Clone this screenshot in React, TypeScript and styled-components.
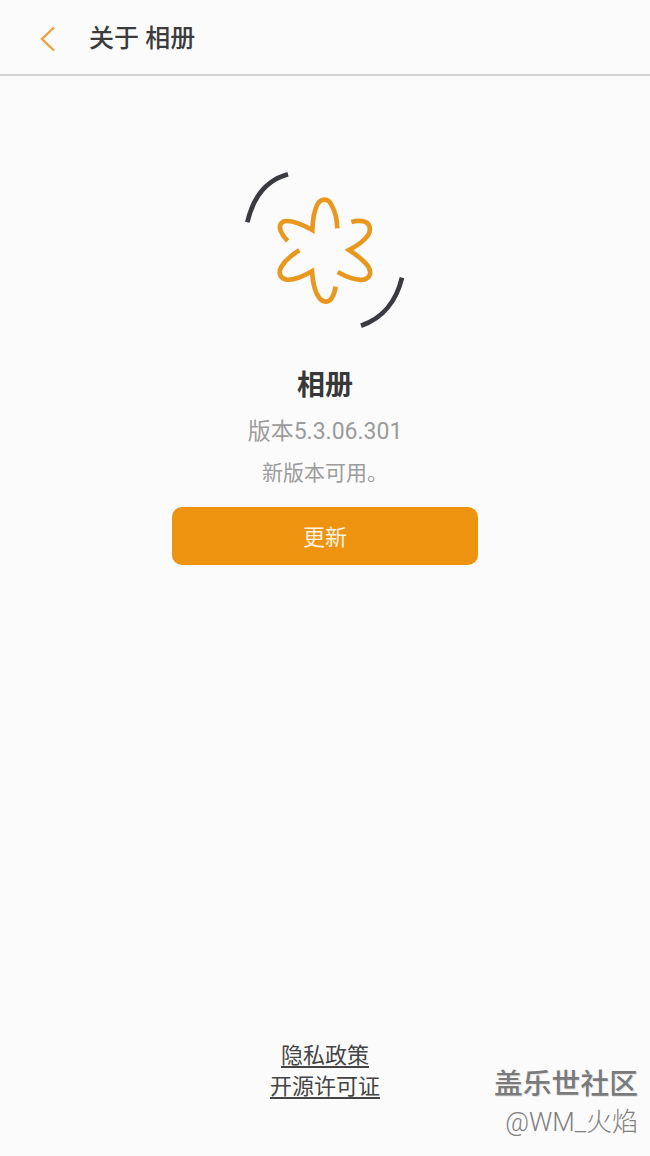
import React, { FC } from 'react'
import styled, { createGlobalStyle } from 'styled-components'

const GlobalStyle = createGlobalStyle`
  html, body {
    margin: 0;
    padding: 0;
    background: #fbfbfb;
  }
  * {
    box-sizing: border-box;
  }
`

const Page = styled.div`
  position: relative;
  display: flex;
  flex-direction: column;
  width: 650px;
  height: 1156px;
  overflow: hidden;
  background: #fbfbfb;
  font-family: Roboto, 'Noto Sans CJK SC', sans-serif;
`

const Header = styled.header`
  display: flex;
  align-items: center;
  height: 76px;
  padding: 3px 0 0 36px;
  border-bottom: 2px solid #d4d4d4;
`

const BackButton = styled.button`
  display: flex;
  width: 24px;
  height: 30px;
  padding: 0;
  margin-right: 29px;
  border: 0;
  background: none;
`

const Title = styled.h1`
  margin: 0;
  font-size: 25px;
  font-weight: 500;
  line-height: 30px;
  color: #3c3c3c;
`

const Main = styled.main`
  display: flex;
  flex-direction: column;
  align-items: center;
  padding-top: 74px;
`

const AppName = styled.h2`
  margin: 17px 0 0;
  font-size: 28px;
  font-weight: 700;
  line-height: 38px;
  color: #383838;
`

const Version = styled.div`
  margin-top: 11px;
  font-size: 23px;
  line-height: 32px;
  color: #9c9c9c;
`

const Notice = styled.div`
  margin-top: 10px;
  font-size: 21px;
  line-height: 30px;
  color: #9c9c9c;
`

const UpdateButton = styled.button`
  width: 306px;
  height: 58px;
  margin-top: 19px;
  padding: 0 0 2px;
  border: 0;
  border-radius: 10px;
  background: #ed930f;
  font-family: inherit;
  font-size: 22px;
  color: #fdf3e2;
`

const Footer = styled.footer`
  display: flex;
  flex-direction: column;
  align-items: center;
  margin-top: auto;
  padding-bottom: 54px;
`

const FooterLink = styled.a`
  font-size: 22px;
  line-height: 31px;
  color: #444444;
  text-decoration: underline;
  text-underline-offset: 3px;
`

const Watermark = styled.div`
  position: absolute;
  right: 12px;
  bottom: 15px;
  display: flex;
  flex-direction: column;
  align-items: flex-end;
`

const WatermarkTitle = styled.span`
  font-size: 28.8px;
  font-weight: 500;
  line-height: 38px;
  color: #7a7a7a;
  text-shadow: 1px 1px 0 #e4e4e4;
`

const WatermarkUser = styled.span`
  font-size: 26px;
  font-weight: 300;
  line-height: 38px;
  color: #808080;
`

const BackIcon: FC = () => (
  <svg width="24" height="30" viewBox="0 0 24 30" fill="none">
    <path d="M18 3.5 L6 15 L18 26.5" stroke="#e9a23b" strokeWidth="2.4" />
  </svg>
)

const GalleryLogo: FC = () => (
  <svg width="210" height="200" viewBox="0 0 630 600" fill="none" strokeWidth="14">
    <g stroke="#3a3b40">
      <path d="M204 73 C 140 90, 100 140, 82 217" />
      <path d="M546 383 C 530 450, 490 505, 423 527" />
    </g>
    <g stroke="#e8981f" strokeLinejoin="miter">
      <path d="M352 235 C 351 210, 346 185, 335 166 C 325 143, 302 143, 291 166 C 282 185, 278 212, 277 240 C 250 225, 225 213, 200 213 C 182 213, 176 228, 182 243 C 186 253, 194 264, 203 273" />
      <path d="M394 216 C 405 213, 420 212, 430 214 C 450 218, 454 238, 445 254 C 432 274, 410 288, 387 300 C 410 315, 432 332, 445 350 C 456 368, 450 386, 430 389 C 405 392, 378 380, 353 366" />
      <path d="M238 301 C 215 315, 195 332, 184 350 C 174 368, 180 386, 200 389 C 225 392, 252 378, 276 364 C 278 395, 284 425, 297 443 C 308 458, 325 460, 336 443 C 341 435, 345 422, 347 410" />
    </g>
  </svg>
)

const App: FC = () => (
  <Page>
    <GlobalStyle />
    <Header>
      <BackButton>
        <BackIcon />
      </BackButton>
      <Title>关于 相册</Title>
    </Header>
    <Main>
      <GalleryLogo />
      <AppName>相册</AppName>
      <Version>版本5.3.06.301</Version>
      <Notice>新版本可用。</Notice>
      <UpdateButton>更新</UpdateButton>
    </Main>
    <Footer>
      <FooterLink>隐私政策</FooterLink>
      <FooterLink>开源许可证</FooterLink>
    </Footer>
    <Watermark>
      <WatermarkTitle>盖乐世社区</WatermarkTitle>
      <WatermarkUser>@WM_火焰</WatermarkUser>
    </Watermark>
  </Page>
)

export default App
